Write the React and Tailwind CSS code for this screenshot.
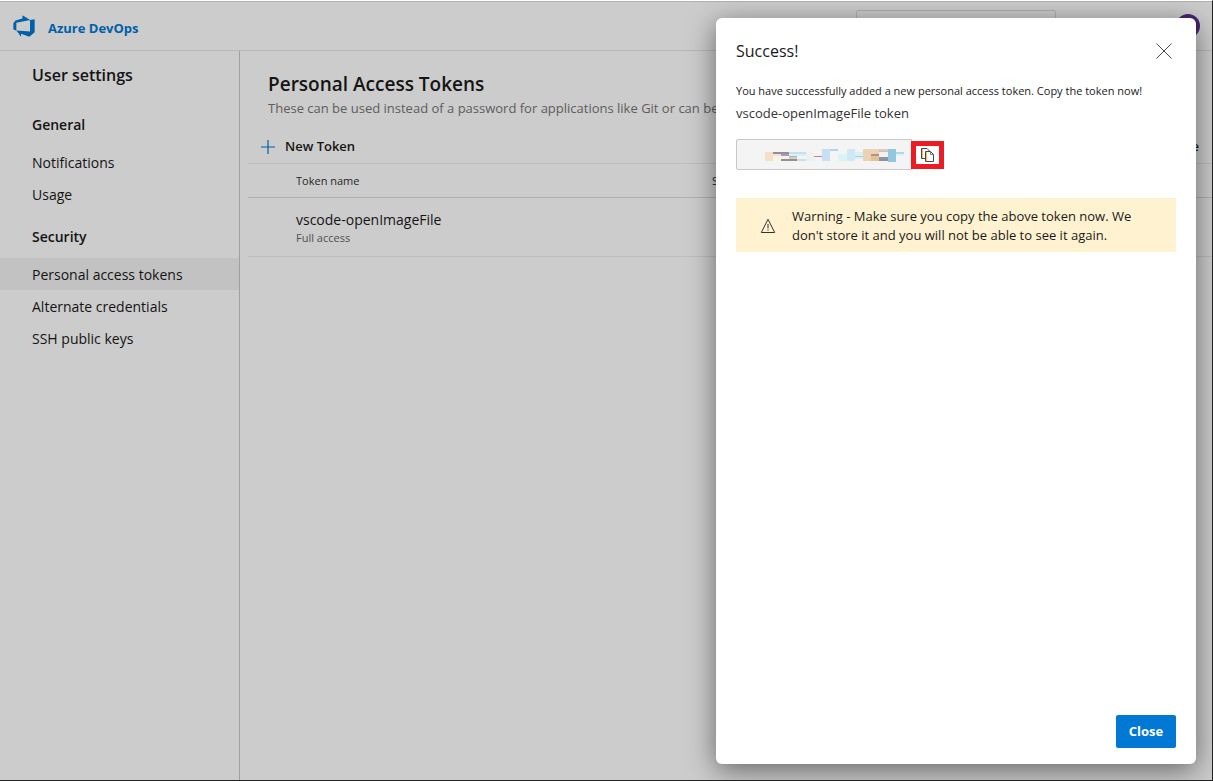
const navSections = [
  { title: "General", items: ["Notifications", "Usage"] },
  {
    title: "Security",
    items: ["Personal access tokens", "Alternate credentials", "SSH public keys"],
  },
];

const ACTIVE_ITEM = "Personal access tokens";

// Obscured token mosaic: [x, y, width, height, colour]
const mosaic = [
  [0, 3, 8, 9, "#f5dfc6"],
  [8, 3, 16, 2, "#929093"],
  [8, 5, 8, 2, "#f3e2cf"],
  [16, 5, 8, 2, "#b194c4"],
  [8, 7, 16, 5, "#f4f3e8"],
  [16, 10, 8, 2, "#929093"],
  [24, 3, 17, 2, "#c6dff3"],
  [24, 5, 17, 2, "#d9f0f4"],
  [24, 7, 8, 1, "#85c0dd"],
  [24, 8, 8, 2, "#e5c9ab"],
  [32, 10, 9, 2, "#c6dff3"],
  [24, 10, 8, 2, "#929093"],
  [41, 3, 8, 4, "#f5f1ea"],
  [41, 7, 8, 5, "#e6f2f4"],
  [49, 7, 8, 1, "#b98387"],
  [57, 0, 8, 12, "#c6dff3"],
  [65, 0, 8, 2, "#b1d3ec"],
  [73, 5, 9, 7, "#daf3f5"],
  [82, 0, 8, 12, "#d0e8f4"],
  [90, 3, 8, 7, "#daf0f5"],
  [90, 7, 8, 1, "#a3d0e6"],
  [98, 0, 8, 12, "#ebd2b4"],
  [106, 0, 8, 5, "#ebd2b4"],
  [106, 5, 8, 2, "#b6918b"],
  [106, 7, 8, 5, "#dfc391"],
  [114, 0, 9, 2, "#e8c7a2"],
  [114, 2, 9, 1, "#c3bfd8"],
  [114, 3, 9, 5, "#f1f1f1"],
  [114, 8, 9, 2, "#8c94ae"],
  [114, 10, 9, 2, "#929093"],
  [123, 0, 8, 13, "#94c6de"],
  [131, 3, 8, 2, "#b1d3ec"],
  [131, 5, 8, 2, "#daf3f5"],
];

function DevOpsLogo() {
  return (
    <svg width="24" height="24" viewBox="0 0 18 18" aria-hidden="true">
      <path
        fill="#0078d4"
        d="M17 4v9.740l-4 3.280-6.200-2.260V17l-3.510-4.590 10.230.8V4.440zm-3.410.490L7.850 1v2.290L2.580 4.840 1 6.870v4.610l2.260 1V6.570z"
      />
    </svg>
  );
}

function PlusIcon() {
  return (
    <svg width="14" height="14" viewBox="0 0 14 14" aria-hidden="true">
      <path d="M7 0v14M0 7h14" stroke="#0078d4" strokeWidth="1.2" fill="none" />
    </svg>
  );
}

function CloseIcon() {
  return (
    <svg width="16" height="16" viewBox="0 0 16 16" aria-hidden="true">
      <path d="M.5.5l15 15M15.5.5l-15 15" stroke="#333" strokeWidth=".9" fill="none" />
    </svg>
  );
}

function CopyIcon() {
  return (
    <svg width="14" height="14" viewBox="0 0 14 14" aria-hidden="true">
      <path d="M1.500 1v9.500M5.500 4v9" stroke="#f0b860" strokeWidth="1" />
      <g fill="none" stroke="#444" strokeWidth="1">
        <path d="M4 10.500H.5V.5H6L8.500 3" />
        <path d="M4.500 3.500H9.500L12.500 6.500v7h-8z" />
        <path d="M9.500 3.500v3h3" strokeWidth=".7" />
      </g>
    </svg>
  );
}

function WarningIcon() {
  return (
    <svg width="16" height="16" viewBox="0 0 16 16" aria-hidden="true">
      <path d="M8 1.300 14.700 14.500H1.300z" fill="none" stroke="#333" strokeWidth="1" />
      <path d="M8 6v4.500M8 11.500v1.200" stroke="#333" strokeWidth="1" />
    </svg>
  );
}

function Header() {
  return (
    <header className="flex h-[50px] shrink-0 items-center justify-between border-y border-t-[#d8dfdf] border-b-[#e6e6e6] pl-3 pr-3">
      <a href="#home" className="flex items-end gap-3 text-[13px] font-bold text-[#0078d4]">
        <DevOpsLogo />
        Azure DevOps
      </a>
      <div className="flex items-center gap-[120px]">
        <input
          type="search"
          aria-label="Search"
          className="h-8 w-[200px] rounded-xs border border-[#dcdcdc] bg-transparent"
        />
        <button type="button" aria-label="Account" className="size-6 rounded-full bg-[#5c2d91]" />
      </div>
    </header>
  );
}

function Sidebar() {
  return (
    <nav className="w-60 shrink-0 border-r border-[#c8c8c8] text-[14px]" aria-label="User settings">
      <h2 className="flex h-[47px] items-center pl-8 text-[16px] font-semibold">User settings</h2>
      {navSections.map((section) => (
        <section key={section.title} className="mt-[10px]">
          <h3 className="mb-[6px] flex h-8 items-center pl-8 font-semibold">{section.title}</h3>
          <ul>
            {section.items.map((item) => (
              <li key={item}>
                <a
                  href="#settings"
                  className={
                    item === ACTIVE_ITEM
                      ? "flex h-8 items-center bg-[#f3f3f3] pl-8"
                      : "flex h-8 items-center pl-8"
                  }
                >
                  {item}
                </a>
              </li>
            ))}
          </ul>
        </section>
      ))}
    </nav>
  );
}

function TokensPage() {
  return (
    <main className="min-w-0 flex-1 pl-2 pt-5">
      <div className="pl-5">
        <h1 className="text-[19px] leading-[26px] font-semibold">Personal Access Tokens</h1>
        <p className="truncate text-[13px] leading-[22px] text-[#767676]">
          These can be used instead of a password for applications like Git or can be
        </p>
      </div>
      <div className="mt-3 flex h-8 items-center justify-between pl-[13px] pr-[13px] text-[13px] font-semibold">
        <button type="button" className="flex items-center gap-[10px]">
          <PlusIcon />
          New Token
        </button>
        <button type="button">Regenerate</button>
      </div>
      <table className="w-full table-fixed border-t border-[#ececec] text-left">
        <thead>
          <tr className="h-[34px] border-b border-[#dcdcdc] text-[11px] text-[#333]">
            <th className="w-[464px] pt-[2px] pl-12 font-normal">Token name</th>
            <th className="pt-[2px] font-normal">Status</th>
          </tr>
        </thead>
        <tbody>
          <tr className="h-[59px] border-b border-[#ececec]">
            <td className="pt-[2px] pl-12">
              <div className="text-[14px] leading-5">vscode-openImageFile</div>
              <div className="text-[11px] leading-4 text-[#666]">Full access</div>
            </td>
            <td />
          </tr>
        </tbody>
      </table>
    </main>
  );
}

function SuccessDialog() {
  return (
    <div
      role="dialog"
      aria-modal="true"
      aria-labelledby="dialog-title"
      className="flex w-[480px] flex-col rounded-md bg-white px-5 pb-4 pt-5 shadow-[0_6px_28px_rgba(0,0,0,0.5)]"
    >
      <div className="flex h-[25px] items-center justify-between pr-1">
        <h2 id="dialog-title" className="text-[16px]">
          Success!
        </h2>
        <button type="button" aria-label="Dismiss">
          <CloseIcon />
        </button>
      </div>
      <p className="mt-[17px] whitespace-nowrap text-[11px] leading-[22px]">
        You have successfully added a new personal access token. Copy the token now!
      </p>
      <p className="text-[13px] leading-[22px] text-[#333]">vscode-openImageFile token</p>
      <div className="mt-[15px] flex items-center">
        <div
          role="img"
          aria-label="Hidden token"
          className="flex h-[31px] w-[176px] items-center rounded-l-xs border border-[#c8c8c8] bg-[#f4f4f4] pt-[2px] pl-7"
        >
          <svg width="140" height="13" viewBox="0 0 140 13" shapeRendering="crispEdges">
            {mosaic.map(([x, y, w, h, fill]) => (
              <rect key={`${x}-${y}`} x={x} y={y} width={w} height={h} fill={fill} />
            ))}
          </svg>
        </div>
        <button
          type="button"
          aria-label="Copy token"
          className="-ml-px flex h-7 w-[33px] items-center justify-center border-[5px] border-[#ed1c24] bg-white"
        >
          <CopyIcon />
        </button>
      </div>
      <div role="alert" className="mt-7 flex items-center gap-4 bg-[#fff2d0] pt-[9px] pb-[7px] pl-6 pr-4">
        <span className="shrink-0">
          <WarningIcon />
        </span>
        <p className="text-[13px] leading-[19px]">
          Warning - Make sure you copy the above token now. We don't store it and you will not be
          able to see it again.
        </p>
      </div>
      <div className="mt-auto flex justify-end">
        <button
          type="button"
          className="h-[33px] w-[60px] rounded-xs bg-[#0078d4] text-[13px] font-bold text-white"
        >
          Close
        </button>
      </div>
    </div>
  );
}

export default function App() {
  return (
    <div className="flex h-screen flex-col border-t border-r border-b border-t-white border-r-[#222] border-b-[#222] bg-white font-['Open_Sans','Noto_Sans',sans-serif] text-[#1a1a1a]">
      <div className="relative flex min-h-0 flex-1 flex-col overflow-hidden">
        <Header />
        <div className="flex min-h-0 flex-1">
          <Sidebar />
          <TokensPage />
        </div>
        <div className="absolute inset-0 flex justify-end bg-black/20 px-4 pb-4 pt-[17px]">
          <SuccessDialog />
        </div>
      </div>
    </div>
  );
}
